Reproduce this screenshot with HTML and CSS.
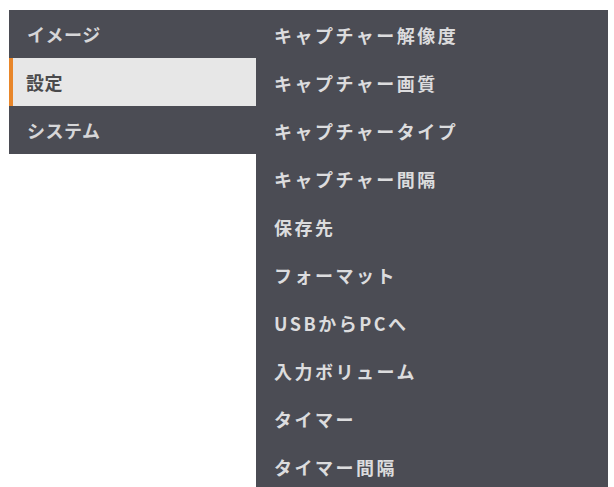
FILE: index.html
```html
<!DOCTYPE html>
<html lang="ja">
<head>
<meta charset="utf-8">
<link rel="stylesheet" href="styles.css">
</head>
<body>
<div class="screen">
  <ul class="menu">
    <li class="menu-item">イメージ</li>
    <li class="menu-item selected">設定</li>
    <li class="menu-item">システム</li>
  </ul>
  <ul class="submenu">
    <li class="sub-item">キャプチャー解像度</li>
    <li class="sub-item">キャプチャー画質</li>
    <li class="sub-item">キャプチャータイプ</li>
    <li class="sub-item">キャプチャー間隔</li>
    <li class="sub-item">保存先</li>
    <li class="sub-item">フォーマット</li>
    <li class="sub-item">USBからPCへ</li>
    <li class="sub-item">入力ボリューム</li>
    <li class="sub-item">タイマー</li>
    <li class="sub-item">タイマー間隔</li>
  </ul>
</div>
</body>
</html>
```
FILE: styles.css
```css
html, body {
  margin: 0;
  padding: 0;
  background: #ffffff;
  overflow: hidden;
}
.screen {
  display: flex;
  align-items: flex-start;
  padding: 10px 0 0 9px;
  height: 477px;
  font-family: "Noto Sans CJK JP", "Noto Sans", sans-serif;
}
ul {
  list-style: none;
  margin: 0;
  padding: 0;
}
.menu {
  width: 247px;
  background: #4b4c54;
}
.menu-item {
  height: 48px;
  display: flex;
  align-items: center;
  padding-left: 18px;
  font-size: 18px;
  font-weight: 700;
  letter-spacing: 0.5px;
  color: #d6d6d8;
}
.menu-item.selected {
  background: #e7e7e7;
  color: #4a4a4c;
  border-left: 4px solid #e8862a;
  padding-left: 13px;
}
.submenu {
  width: 352px;
  height: 480px;
  background: #4b4c54;
  padding-top: 1px;
  box-sizing: border-box;
}
.sub-item {
  height: 48px;
  display: flex;
  align-items: center;
  padding-left: 18px;
  font-size: 18px;
  font-weight: 700;
  letter-spacing: 2.5px;
  color: #dcdcde;
}
```
